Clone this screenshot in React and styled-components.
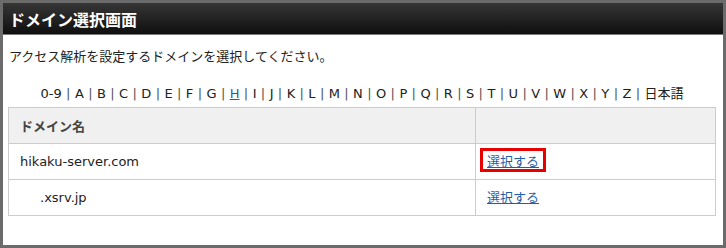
import React from "react";
import styled, { createGlobalStyle } from "styled-components";

const GlobalStyle = createGlobalStyle`
  body {
    margin: 0;
    background: #fff;
    font-family: "DejaVu Sans", "Noto Sans CJK JP", sans-serif;
  }
`;

const Frame = styled.div`
  width: 726px;
  height: 248px;
  box-sizing: border-box;
  border: 3px solid #6b6b6b;
  background: #fff;
`;

const Header = styled.h1`
  margin: 0;
  height: 31px;
  display: flex;
  align-items: center;
  padding-left: 6px;
  background: linear-gradient(#363636, #0f0f0f);
  border-bottom: 1px solid #7a7a7a;
  color: #fff;
  font-family: "Noto Sans CJK JP", sans-serif;
  font-size: 16px;
  font-weight: bold;
`;

const Body = styled.div`
  padding: 11px 7px 0 5px;
`;

const Lead = styled.p`
  margin: 0 0 0 1px;
  font-family: "Noto Sans CJK JP", sans-serif;
  font-size: 13px;
  line-height: 20px;
  color: #222;
`;

const AlphaNav = styled.div`
  margin: 18px 0 3px;
  text-align: center;
  font-size: 13px;
  line-height: 20px;
  color: #222;
  word-spacing: -0.75px;
`;

const Sep = styled.span`
  color: #555;
  margin: 0 1px;
`;

const Link = styled.a`
  color: #1f5fa8;
  text-decoration: underline;
  cursor: pointer;
`;

const Table = styled.table`
  width: 100%;
  border-collapse: collapse;
  border: 1px solid #cccccc;
  font-size: 13px;
  color: #222;
`;

const Cell = styled.td`
  height: 35px;
  padding: 0 11px;
  border: 1px solid #cccccc;
  background: ${(p) => (p.$head ? "#f0f0f0" : "#fff")};
  font-weight: ${(p) => (p.$head ? "bold" : "normal")};
  color: ${(p) => (p.$head ? "#444" : "#222")};
  font-family: ${(p) =>
    p.$head ? '"Noto Sans CJK JP", sans-serif' : '"DejaVu Sans", "Noto Sans CJK JP", sans-serif'};
  width: ${(p) => p.$w || "auto"};
  padding-left: ${(p) => (p.$indent ? "31px" : "11px")};
`;

const SelectLink = styled(Link)`
  display: inline-block;
  line-height: 13px;
  font-family: "Noto Sans CJK JP", sans-serif;
  position: relative;
  ${(p) =>
    p.$marked &&
    `
    &::after {
      content: "";
      position: absolute;
      top: -6px;
      bottom: -5px;
      left: -7px;
      right: -7px;
      border: 3px solid #e60000;
    }
  `}
`;

const letters = ["0-9", ..."ABCDEFGHIJKLMNOPQRSTUVWXYZ".split(""), "日本語"];

const domains = [
  { name: "hikaku-server.com", indent: false, marked: true },
  { name: ".xsrv.jp", indent: true, marked: false },
];

export default function App() {
  return (
    <>
      <GlobalStyle />
      <Frame>
        <Header>ドメイン選択画面</Header>
        <Body>
          <Lead>アクセス解析を設定するドメインを選択してください。</Lead>
          <AlphaNav>
            {letters.map((l, i) => (
              <React.Fragment key={l}>
                {i > 0 && <Sep> | </Sep>}
                {l === "H" ? <Link>H</Link> : l}
              </React.Fragment>
            ))}
          </AlphaNav>
          <Table>
            <tbody>
              <tr>
                <Cell $head $w="444px">ドメイン名</Cell>
                <Cell $head></Cell>
              </tr>
              {domains.map((d) => (
                <tr key={d.name}>
                  <Cell $indent={d.indent}>{d.name}</Cell>
                  <Cell>
                    <SelectLink $marked={d.marked}>選択する</SelectLink>
                  </Cell>
                </tr>
              ))}
            </tbody>
          </Table>
        </Body>
      </Frame>
    </>
  );
}
